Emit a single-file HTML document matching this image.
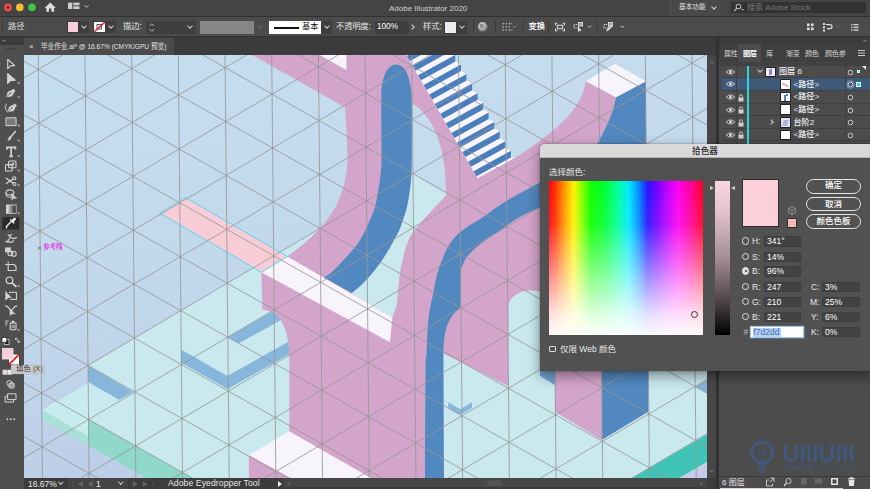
<!DOCTYPE html>
<html lang="zh-CN">
<head>
<meta charset="utf-8">
<title>Adobe Illustrator 2020</title>
<style>
*{box-sizing:border-box;margin:0;padding:0}
html,body{width:870px;height:489px;overflow:hidden;background:#3b3b3b}
body{position:relative;font-family:"Liberation Sans","Noto Sans CJK SC",sans-serif;font-size:8px;color:#dcdcdc;line-height:1}
.abs{position:absolute}
#titlebar{left:0;top:0;width:870px;height:17px;background:#444444;border-bottom:1px solid #303030}
#ctrlbar{left:0;top:17px;width:870px;height:20px;background:#4b4b4b;border-bottom:1px solid #333}
#tabbar{left:0;top:37px;width:870px;height:18px;background:#3b3b3b}
#doctab{left:24px;top:38px;width:150px;height:17px;background:#4b4b4b;color:#e4e4e4;font-size:7.7px;line-height:17px;white-space:nowrap;overflow:hidden}
#toolbar{left:0;top:37px;width:23.5px;height:452px;background:#4f4f4f}
#tooltop{left:0;top:37px;width:23.5px;height:8px;background:#3b3b3b;color:#aaa;font-size:6px;line-height:7px;padding-left:2px}
.t{position:absolute;white-space:nowrap}
.dd{position:absolute;border:solid #d0d0d0;border-width:0 1px 1px 0;width:4px;height:4px;transform:rotate(45deg)}
#statusbar{left:24px;top:478px;width:690px;height:11px;background:#3c3c3c;color:#e8e8e8;font-size:8.5px}
#vscroll{left:707px;top:55px;width:9px;height:423px;background:#474747}
#rgap{left:716px;top:37px;width:3px;height:452px;background:#323232}
#panel{left:719px;top:44px;width:151px;height:445px;background:#4c4c4c}
#ptabs{left:719px;top:44px;width:151px;height:18px;background:#3f3f3f;font-size:7.2px;letter-spacing:-0.35px;color:#d4d4d4}
.row{position:absolute;left:722px;width:148px;height:12.6px;border-bottom:1px solid #404040;font-size:8.1px;font-weight:500;color:#f0f0f0}
.eye{position:absolute;left:4px;top:3px;width:9px;height:6px}
#dialog{left:540px;top:144px;width:332px;height:227px;background:#515151;border-radius:4px 4px 0 0;box-shadow:0 5px 13px rgba(0,0,0,.42),0 0 1.5px rgba(0,0,0,.6);overflow:hidden}
#dtitle{left:0;top:0;width:332px;height:14px;background:#d9d9d9;color:#2a2a2a;font-weight:500;font-size:8.6px;line-height:14px;text-align:center;padding-right:2px;border-bottom:1px solid #b5b5b5}
.fld{position:absolute;height:10.8px;background:#434343;border:0.5px solid #3e3e3e;border-radius:1px;color:#fff;font-size:8.5px;line-height:9px;padding-left:2px}
.radio{position:absolute;width:7.7px;height:7.7px;border:0.9px solid #e2e2e2;border-radius:50%}
.lbl{position:absolute;font-size:8.5px;color:#e8e8e8}
.btn{position:absolute;left:266px;width:55px;height:14.5px;border:1px solid #e6e6e6;border-radius:8px;color:#fff;font-weight:500;font-size:8.5px;text-align:center;line-height:12px}
</style>
</head>
<body>
<div id="titlebar" class="abs">
  <svg class="abs" style="left:0;top:0" width="120" height="17" viewBox="0 0 120 17">
    <circle cx="8" cy="7.4" r="3.8" fill="#f5504e"/><circle cx="8" cy="7.4" r="1.4" fill="#8a1410"/>
    <circle cx="19.8" cy="7.4" r="3.8" fill="#f8be2e"/>
    <circle cx="32" cy="7.4" r="3.8" fill="#3bc448"/>
    <path d="M50.200 2.600 L44.600 8 H46.300 V11.800 H49 V8.600 H51.400 V11.800 H54.100 V8 H55.800 Z" fill="#dcdcdc"/>
    <rect x="68" y="2.600" width="4.300" height="6.400" fill="#cfcfcf"/><rect x="73.300" y="2.600" width="6.200" height="2.700" fill="#cfcfcf"/><rect x="73.300" y="6.300" width="6.200" height="2.700" fill="#cfcfcf"/>
    <path d="M84.5 5.3 l2 2 l2 -2" stroke="#cfcfcf" stroke-width="1" fill="none"/>
  </svg>
  <div class="t" style="left:389px;top:4.5px;font-size:8px;color:#cfcfcf">Adobe Illustrator 2020</div>
  <div class="abs" style="left:670px;top:0;width:57px;height:17px;background:#494949;border-left:1px solid #525252;border-bottom:1px solid #303030"></div>
  <div class="t" style="left:679px;top:4px;font-size:6.7px;color:#e2e2e2">基本功能</div>
  <div class="dd" style="left:712px;top:4.5px"></div>
  <div class="abs" style="left:731px;top:2px;width:135px;height:11px;background:#323232;border-radius:1px"></div>
  <svg class="abs" style="left:733px;top:3px" width="12" height="10" viewBox="0 0 12 10"><circle cx="5.5" cy="3.5" r="2.4" stroke="#c8c8c8" stroke-width="1" fill="none"/><path d="M3.8 5.3 L1 8.2" stroke="#c8c8c8" stroke-width="1.1"/><path d="M8 6 h3 l-1.5 1.6z" fill="#c8c8c8"/></svg>
  <div class="t" style="left:747px;top:4px;font-size:8px;color:#767676">搜索 Adobe Stock</div>
</div>
<div id="ctrlbar" class="abs">
  <div class="abs" style="left:2px;top:3px;width:1px;height:13px;background:#3a3a3a"></div>
  <div class="t" style="left:8px;top:6px;font-size:8.2px;color:#dadada">路径</div>
  <div class="abs" style="left:67px;top:4px;width:12px;height:12px;background:#f7cfda;border:1px solid #3a3a3a"></div>
  <div class="abs" style="left:79px;top:4px;width:10px;height:12px;background:#3e3e3e"></div><div class="dd" style="left:82px;top:6.5px"></div>
  <svg class="abs" style="left:93px;top:4px" width="13" height="12" viewBox="0 0 13 12"><rect x="0.5" y="0.5" width="12" height="11" fill="#fff" stroke="#3a3a3a"/><rect x="4" y="3.5" width="4.5" height="4.5" fill="none" stroke="#555" stroke-width="1"/><path d="M1 11 L12 1" stroke="#e0242a" stroke-width="1.6"/></svg>
  <div class="abs" style="left:106px;top:4px;width:10px;height:12px;background:#3e3e3e"></div><div class="dd" style="left:109px;top:6.5px"></div>
  <div class="t" style="left:123px;top:6px;font-size:8.2px;color:#e6e6e6">描边:</div>
  <div class="abs" style="left:146px;top:4px;width:50px;height:13px;background:#3e3e3e"></div>
  <svg class="abs" style="left:148px;top:5px" width="8" height="11" viewBox="0 0 8 11"><path d="M1.5 4 l2.3-2.3 l2.3 2.3 M1.5 7 l2.3 2.3 l2.3-2.3" stroke="#c8c8c8" fill="none" stroke-width="0.9"/></svg>
  <div class="dd" style="left:188px;top:6.5px"></div>
  <div class="abs" style="left:200px;top:4px;width:54px;height:13px;background:#868686"></div>
  <div class="dd" style="left:258px;top:6.5px;border-color:#6a6a6a"></div>
  <div class="abs" style="left:269px;top:4px;width:52px;height:13px;background:#fff"></div>
  <div class="abs" style="left:274px;top:10px;width:25px;height:1.6px;background:#111"></div>
  <div class="t" style="left:302px;top:6px;font-size:8.2px;color:#111">基本</div>
  <div class="abs" style="left:321px;top:4px;width:11px;height:13px;background:#3e3e3e"></div><div class="dd" style="left:325px;top:6.5px"></div>
  <div class="t" style="left:336px;top:6px;font-size:8.2px;color:#e6e6e6">不透明度:</div>
  <div class="abs" style="left:375px;top:4px;width:34px;height:13px;background:#3e3e3e"></div>
  <div class="t" style="left:377px;top:6px;font-size:8.2px;color:#fff">100%</div>
  <div class="dd" style="left:410px;top:8px;transform:rotate(-45deg)"></div>
  <div class="t" style="left:423px;top:6px;font-size:8.2px;color:#e6e6e6">样式:</div>
  <div class="abs" style="left:444px;top:4px;width:13px;height:13px;background:#ececec;border:1px solid #3a3a3a"></div>
  <div class="abs" style="left:457px;top:4px;width:10px;height:13px;background:#3e3e3e"></div><div class="dd" style="left:460px;top:6.5px"></div>
  <svg class="abs" style="left:470px;top:0" width="170" height="20" viewBox="470 17 170 20">
    <defs><radialGradient id="gl" cx="0.35" cy="0.3" r="0.8"><stop offset="0" stop-color="#e4e4e4"/><stop offset="0.6" stop-color="#a2a2a2"/><stop offset="1" stop-color="#6a6a6a"/></radialGradient></defs>
    <g stroke="#3a3a3a" stroke-width="1"><path d="M473.500 20 v14 M495.500 20 v14 M523 20 v14 M548.500 20 v14 M597 20 v14"/></g>
    <circle cx="482.700" cy="26.800" r="4.800" fill="url(#gl)"/><path d="M479.500 24.500 q2-1.500 4 0.300 q1 1.500 -.5 3 q-2 .8 -3-1z" fill="#8a8a8a"/>
    <g fill="#c6c6c6"><rect x="502.500" y="23" width="1.300" height="1.300"/><rect x="505.600" y="23" width="1.300" height="1.300"/><rect x="508.700" y="23" width="1.300" height="1.300"/><rect x="511.300" y="23" width="1" height="1.300"/><rect x="502.500" y="26.200" width="1.300" height="1.300"/><rect x="505.600" y="26.200" width="1.300" height="1.300"/><rect x="508.700" y="26.200" width="1.300" height="1.300"/><rect x="502.500" y="29.400" width="1.300" height="1.300"/><rect x="505.600" y="29.400" width="1.300" height="1.300"/><rect x="508.700" y="29.400" width="1.300" height="1.300"/><rect x="511.300" y="29.400" width="1" height="1.300"/></g>
    <path d="M512.800 26 l1.600 1.600 l1.600-1.600" stroke="#a0a0a0" fill="none" stroke-width="0.800"/>
    <g stroke="#d4d4d4" stroke-width="1.100" fill="none"><path d="M557.500 23.300 h-2 v2 M562.500 23.300 h2 v2 M557.500 30.700 h-2 v-2 M562.500 30.700 h2 v-2"/><rect x="557.300" y="25.300" width="5.400" height="3.400"/></g>
    <g stroke="#d4d4d4" stroke-width="1" fill="none"><rect x="574" y="24.500" width="4.500" height="3.500" stroke-dasharray="1.200 0.800"/><rect x="578.500" y="22.500" width="4" height="3.500" fill="#9a9a9a"/></g><path d="M578 26.500 v5.500 l1.500-1.300 l2.300 0z" fill="#e4e4e4"/>
    <path d="M587.900 25.800 l1.700 1.700 l1.700-1.700" stroke="#d0d0d0" fill="none" stroke-width="1"/>
    <g stroke="#d4d4d4" stroke-width="1" fill="none"><rect x="604" y="24.500" width="4.500" height="3.500" stroke-dasharray="1.200 0.800"/><rect x="608.500" y="22.500" width="4" height="3" fill="#9a9a9a"/></g><path d="M606 31.500 l1-2.500 l4.500-4.500 l1.500 1.500 l-4.500 4.500z" fill="#d8d8d8"/>
    <path d="M620.600 25.800 l1.700 1.700 l1.700-1.700" stroke="#d0d0d0" fill="none" stroke-width="1"/>
  </svg>
  <div class="t" style="left:528.500px;top:5.500px;font-size:8.200px;color:#f4f4f4;font-weight:bold">变换</div>
  <svg class="abs" style="left:805px;top:4px" width="60" height="13" viewBox="0 0 60 13">
    <g fill="#e0e0e0"><rect x="2" y="2.5" width="2.6" height="2.6"/><rect x="6" y="2.5" width="2.6" height="2.6"/><rect x="2" y="6.5" width="2.6" height="2.6"/><rect x="6" y="6.5" width="2.6" height="2.6"/></g>
    <g fill="#e0e0e0"><rect x="18" y="2" width="2" height="2"/><rect x="18" y="5.3" width="2" height="2"/><rect x="18" y="8.6" width="2" height="2"/></g><path d="M21 3.6 h4 a2 2 0 0 1 0 4 h-3" stroke="#e0e0e0" stroke-width="1.2" fill="none"/>
    <path d="M31 5.4 l1.6 1.6 l1.6-1.6" stroke="#777" fill="none" stroke-width="0.8"/>
    <g fill="#d0d0d0"><rect x="46" y="3" width="1.5" height="1.4"/><rect x="46" y="5.7" width="1.5" height="1.4"/><rect x="46" y="8.4" width="1.5" height="1.4"/><rect x="48.5" y="3" width="5" height="1.4"/><rect x="48.5" y="5.7" width="5" height="1.4"/><rect x="48.5" y="8.4" width="5" height="1.4"/></g>
  </svg>
</div>
<div id="tabbar" class="abs"></div>
<div id="doctab" class="abs"><span style="margin-left:5px;font-size:8px">×</span><span style="margin-left:7px;display:inline-block;transform-origin:0 50%;transform:scaleX(.86)">毕业作业.ai* @ 16.67% (CMYK/GPU 预览)</span></div>
<svg class="abs" style="left:24px;top:55px" width="683" height="423" viewBox="24 55 683 423">
<defs><linearGradient id="bg" x1="0" y1="0" x2="0.25" y2="1"><stop offset="0" stop-color="#c5deef"/><stop offset="0.5" stop-color="#c2d9ec"/><stop offset="1" stop-color="#bccee8"/></linearGradient></defs>
<rect x="24" y="55" width="683" height="423" fill="url(#bg)"/>
<polygon points="88,365.5 413,173.6 730,352 730,421 632,478 192.5,478 88.1,419" fill="#c9e9ee"/>
<polygon points="42.2,409.7 88.1,383 88.1,436.6" fill="#c8ecee"/>
<polygon points="42.2,410.2 88.1,436.6 88.1,445.6 42.2,419.6" fill="#a8e1d8"/>
<polygon points="88.1,419 192.5,478 146.5,478 88.1,445.6" fill="#8fd8ca"/>
<polygon points="88.2,365.5 133.3,392 119,399.8 88.2,382" fill="#87b6dc"/>
<polygon points="730,421 632,478 679.4,478 730,448.5" fill="#40c4b6"/>
<polygon points="730,448.5 679.4,478 730,478" fill="#c4cdea"/>
<polygon points="695.1,386.5 712,376.8 712,396.2" fill="#87b6dc"/>
<polygon points="227.5,337.3 273.6,310.7 292,310.7 292,314 238.8,343.3" fill="#87b6dc"/>
<polygon points="180.9,349.6 227.5,376 295,338 295,351 227.5,389 180.9,362.5" fill="#87b6dc"/>
<polygon points="448.3,402.3 460.3,409.3 472,402.3 472,407.9 460.3,414.9 448.3,407.9" fill="#87b6dc"/>
<polygon points="160,213.3 185.7,197.7 287.3,256.5 261.4,272.3" fill="#f9cdd8"/>
<path d="M252,55 L345,107.2 L346.4,130 L347.6,156 C347.6,175 343,196 332,213 C320,231 302,246 287.3,256.5 L261.4,272.3 L262.4,309.5 L274.8,312.5 C283,320 289.3,336 289.3,356 L289.3,478 L425.5,478 L425.5,363 L434.6,290 L459.1,238.8 L513.2,197 L540.2,182.3 L560,172 L560,147 L596,147 L597,144 C606,128 614,112 615.9,97.3 L586,81.2 C583,98 573,114 555.6,128.2 C544,138 530,149 514.9,157.7 L477.6,178.2 L406.4,55 Z" fill="#d4a5ca"/>
<path d="M411.8,103.500 C416,106 419.500,109 422.500,111.900 C426,115.500 429,120 431.500,124.300 C434.500,129.500 436.500,134.500 438.300,140 C440.300,146 441.800,152 442.800,158 C443.800,163.500 444.600,168.500 445,173.800 L446,195.500  C436,206 421,221 410,236.500 C406,246 404,252 403.300,257.700 C401,266 399.800,272 399.200,279 L396.700,305 L392.300,317.500 L351.700,294 L380,258 L405,200 Z" fill="#c9e9ee"/>
<path d="M411.8,103.500 C416,106 419.500,109 422.500,111.900 C426,115.500 429,120 431.500,124.300 C434.500,129.500 436.500,134.500 438.300,140 C440.300,146 441.800,152 442.800,158 C443.800,163.500 444.600,168.500 445,173.800 L446,195.500  L411.800,173.300 Z" fill="#c4dced"/>
<path d="M540.2,200 L518.1,211 L493.5,228 L470,248 L455,270 L452,300 L445,318 L438,340 L443.3,353.2 L508.4,386.2 L508.4,308 C508.4,298 518,290.5 531,290.5 C544,290.5 555,298 555,308 L555,411.7 L601.7,440 L601.7,200 Z" fill="#d4a5ca"/>
<polygon points="540,300 555,308 555,385.2 540,375.8" fill="#6fa2d2"/>
<polygon points="601.7,200 648.3,200 648.3,411.7 601.7,440" fill="#5288c0"/>
<path d="M381.300,98 C381,78 387,64.600 396.500,64.600 C405.500,64.600 411.800,78 411.800,103.500 L411.800,120 L381.300,120 Z M381.3,120 C381.3,126.7 381.6,150.9 381.5,160 C381.4,169.1 381.1,168.8 380.5,174.3 C379.9,179.8 378.9,187.2 377.9,192.9 C376.9,198.6 375.9,203.7 374.4,208.7 C372.8,213.7 370.3,218.9 368.6,223 C366.9,227.1 366.1,229.3 364,233.2 C361.9,237.1 359.4,241.7 355.8,246.3 C352.2,250.9 346.8,256.6 342.7,261 C338.6,265.4 334.4,269.8 331.3,272.5 C328.2,275.2 325.1,276.6 323.9,277.4 L351.7,292.9 C353.5,291.4 358.4,287.8 362.4,283.9 C366.4,279.9 371.4,274.4 375.5,269.2 C379.6,264.0 383.6,258.0 386.9,252.8 C390.2,247.6 393.0,241.9 395.1,238.1 C397.2,234.3 398.1,233.0 399.4,230 C400.7,227.0 401.7,224.1 403,220.1 C404.3,216.1 406.1,211.1 407.3,205.8 C408.5,200.6 409.4,193.6 410.1,188.6 C410.8,183.6 411.0,180.5 411.3,175.7 C411.6,170.9 411.7,169.3 411.8,160 C411.9,150.7 411.8,126.7 411.8,120 Z" fill="#5288c0"/>
<path d="M560,172 C556.7,173.7 548.0,178.1 540.2,182.3 C532.4,186.5 520.4,192.9 513.2,197 C506.0,201.1 501.9,203.7 497,207 C492.1,210.3 488.2,213.7 483.7,216.7 C479.2,219.7 474.3,222.2 470.1,225 C465.9,227.8 462.0,230.5 458.6,233.6 C455.2,236.7 452.6,239.6 450,243.6 C447.4,247.6 445.0,252.9 442.9,257.9 C440.8,262.9 438.9,267.5 437.2,273.7 C435.5,279.9 434.1,289.2 432.9,295 C431.7,300.8 430.8,303.6 430,308.5 C429.2,313.4 428.5,317.2 427.9,324.6 C427.3,332.1 426.9,345.6 426.5,353.2 C426.1,360.8 425.8,349.2 425.5,370 C425.2,390.8 425.1,460.0 425,478 L444,478 C443.9,458.8 443.6,385.2 443.5,363 C443.4,340.8 443.2,350.5 443.7,344.6 C444.2,338.7 445.1,332.2 446.5,327.4 C447.9,322.6 449.9,319.3 452.2,316 C454.5,312.7 459.1,308.8 460.5,307.4 C460.6,301.5 460.5,279.0 460.8,272.2 C461.1,265.4 461.1,269.1 462.2,266.5 C463.3,263.9 464.7,259.8 467.2,256.5 C469.7,253.2 473.7,249.6 477.3,246.5 C480.9,243.4 484.9,240.5 488.7,237.9 C492.5,235.3 495.1,234.0 500,230.7 C504.9,227.4 511.4,221.9 518.1,217.9 C524.8,213.9 533.2,210.4 540.2,206.9 C547.2,203.4 556.7,198.7 560,197 Z" fill="#5288c0"/>
<polygon points="261.4,272.3 287.3,256.5 392.3,317.5 390,342.2" fill="#f7f5fb"/>
<polygon points="319.8,55 346.4,55 346.4,70" fill="#f7f5fb"/>
<polygon points="248.9,455.2 289.2,431.3 371,478 290.7,478" fill="#f7f5fb"/>
<polygon points="248.9,455.2 290.7,478 248.9,478" fill="#d4a5ca"/>
<path d="M615.9,97.300 L646,81.200 L646,200 L575,200 L597,144 C606,128 614,112 615.900,97.300 Z" fill="#5288c0"/>
<polygon points="586,81.2 615,63.8 646,81.2 615.9,97.3" fill="#f7f5fb"/>
<polygon points="400,44 438.8,26 438.8,32.6 444.3,35.6 444.3,42.2 449.9,45.2 449.9,51.8 455.4,54.8 455.4,61.4 461,64.4 461,71 466.5,74 466.5,80.6 472.1,83.6 472.1,90.2 477.6,93.2 477.6,99.8 483.2,102.8 483.2,109.4 488.7,112.4 488.7,119 494.3,122 494.3,128.6 499.8,131.6 499.8,138.2 505.4,141.2 505.4,147.8 510.9,150.8 510.9,157.4 514.9,157.7 477.6,178.2" fill="#f7f5fb"/>
<polygon points="401.5,46.5 404.4,51.5 438.8,32.6 438.8,26" fill="#4a7ebd"/>
<polygon points="407,56.1 409.9,61.1 444.3,42.2 444.3,35.6" fill="#4a7ebd"/>
<polygon points="412.6,65.7 415.5,70.7 449.9,51.8 449.9,45.2" fill="#4a7ebd"/>
<polygon points="418.1,75.3 421,80.3 455.4,61.4 455.4,54.8" fill="#4a7ebd"/>
<polygon points="423.7,84.9 426.6,89.9 461,71 461,64.4" fill="#4a7ebd"/>
<polygon points="429.2,94.5 432.1,99.5 466.5,80.6 466.5,74" fill="#4a7ebd"/>
<polygon points="434.8,104.1 437.7,109.1 472.1,90.2 472.1,83.6" fill="#4a7ebd"/>
<polygon points="440.3,113.7 443.2,118.7 477.6,99.8 477.6,93.2" fill="#4a7ebd"/>
<polygon points="445.9,123.3 448.8,128.3 483.2,109.4 483.2,102.8" fill="#4a7ebd"/>
<polygon points="451.4,132.9 454.3,137.9 488.7,119 488.7,112.4" fill="#4a7ebd"/>
<polygon points="457,142.5 459.9,147.5 494.3,128.6 494.3,122" fill="#4a7ebd"/>
<polygon points="462.5,152.1 465.4,157.1 499.8,138.2 499.8,131.6" fill="#4a7ebd"/>
<polygon points="468.1,161.7 471,166.7 505.4,147.8 505.4,141.2" fill="#4a7ebd"/>
<polygon points="473.6,171.3 476.5,176.3 510.9,157.4 510.9,150.8" fill="#4a7ebd"/>
<g stroke="#969696" stroke-width="0.95" fill="none" stroke-opacity="0.88">
<path d="M-8.8,15.9 L-3.8,528.2"/>
<path d="M37.9,15.5 L42.9,527.7"/>
<path d="M84.6,15 L89.6,527.3"/>
<path d="M131.3,14.6 L136.3,526.8"/>
<path d="M177.9,14.1 L183,526.3"/>
<path d="M224.6,13.6 L229.7,525.9"/>
<path d="M271.3,13.2 L276.3,525.4"/>
<path d="M318,12.7 L323,525"/>
<path d="M364.7,12.3 L369.7,524.5"/>
<path d="M411.4,11.8 L416.4,524.1"/>
<path d="M458.1,11.4 L463.1,523.6"/>
<path d="M504.8,10.9 L509.8,523.1"/>
<path d="M551.5,10.4 L556.5,522.7"/>
<path d="M598.2,10 L603.2,522.2"/>
<path d="M644.8,9.5 L649.9,521.8"/>
<path d="M691.5,9.1 L696.6,521.3"/>
<path d="M738.2,8.6 L743.2,520.9"/>
<path d="M-13.8,-496.3 L784.4,-45.8"/>
<path d="M-13.3,-442.4 L775.9,-908.5"/>
<path d="M-13.3,-442.4 L784.9,8.2"/>
<path d="M-12.8,-388.5 L776.5,-854.6"/>
<path d="M-12.8,-388.5 L785.4,62.1"/>
<path d="M-12.3,-334.5 L777,-800.6"/>
<path d="M-12.3,-334.5 L786,116"/>
<path d="M-11.7,-280.6 L777.5,-746.7"/>
<path d="M-11.7,-280.6 L786.5,169.9"/>
<path d="M-11.2,-226.7 L778,-692.8"/>
<path d="M-11.2,-226.7 L787,223.8"/>
<path d="M-10.7,-172.8 L778.6,-638.9"/>
<path d="M-10.7,-172.8 L787.6,277.8"/>
<path d="M-10.1,-118.9 L779.1,-585"/>
<path d="M-10.1,-118.9 L788.1,331.7"/>
<path d="M-9.6,-64.9 L779.6,-531"/>
<path d="M-9.6,-64.9 L788.6,385.6"/>
<path d="M-9.1,-11 L780.2,-477.1"/>
<path d="M-9.1,-11 L789.1,439.5"/>
<path d="M-8.6,42.9 L780.7,-423.2"/>
<path d="M-8.6,42.9 L789.7,493.4"/>
<path d="M-8,96.8 L781.2,-369.3"/>
<path d="M-8,96.8 L790.2,547.4"/>
<path d="M-7.5,150.7 L781.7,-315.4"/>
<path d="M-7.5,150.7 L790.7,601.3"/>
<path d="M-7,204.7 L782.3,-261.4"/>
<path d="M-7,204.7 L791.3,655.2"/>
<path d="M-6.4,258.6 L782.8,-207.5"/>
<path d="M-6.4,258.6 L791.8,709.1"/>
<path d="M-5.9,312.5 L783.3,-153.6"/>
<path d="M-5.9,312.5 L792.3,763"/>
<path d="M-5.4,366.4 L783.9,-99.7"/>
<path d="M-5.4,366.4 L792.8,817"/>
<path d="M-4.9,420.3 L784.4,-45.8"/>
<path d="M-4.9,420.3 L793.4,870.9"/>
<path d="M-4.3,474.3 L784.9,8.2"/>
<path d="M-4.3,474.3 L793.9,924.8"/>
<path d="M-3.8,528.2 L785.4,62.1"/>
<path d="M-3.8,528.2 L794.4,978.7"/>
<path d="M-3.3,582.1 L786,116"/>
<path d="M-3.3,582.1 L795,1032.6"/>
<path d="M-2.7,636 L786.5,169.9"/>
<path d="M-2.7,636 L795.5,1086.6"/>
<path d="M-2.2,689.9 L787,223.8"/>
<path d="M-2.2,689.9 L796,1140.5"/>
<path d="M-1.7,743.9 L787.6,277.8"/>
<path d="M-1.7,743.9 L796.5,1194.4"/>
<path d="M-1.2,797.8 L788.1,331.7"/>
<path d="M-1.2,797.8 L797.1,1248.3"/>
<path d="M-0.6,851.7 L788.6,385.6"/>
<path d="M-0.6,851.7 L797.6,1302.2"/>
<path d="M-0.1,905.6 L789.1,439.5"/>
<path d="M-0.1,905.6 L798.1,1356.2"/>
<path d="M0.4,959.5 L789.7,493.4"/>
<path d="M0.4,959.5 L798.7,1410.1"/>
<path d="M1,1013.5 L790.2,547.4"/>
<path d="M1,1013.5 L799.2,1464"/>
<path d="M1.5,1067.4 L790.7,601.3"/>
<path d="M1.5,1067.4 L799.7,1517.9"/>
<path d="M2,1121.3 L791.3,655.2"/>
</g>
<polygon points="160,213.3 185.7,197.7 287.3,256.5 261.4,272.3" fill="none" stroke="#38d6ee" stroke-width="0.8"/>
<text x="43" y="248.5" font-size="6.5" fill="#e020e8" font-weight="bold" font-family="'Liberation Serif','Noto Serif CJK SC',serif">参考线</text>
<path d="M38,246.500 l3,3 m0,-3 l-3,3" stroke="#333" stroke-width="0.600"/>
</svg>
<div id="toolbar" class="abs"></div>
<div id="tooltop" class="abs">››</div>
<svg class="abs" style="left:0;top:37px" width="24" height="452" viewBox="0 37 24 452">
  <rect x="6" y="48.500" width="11" height="1" fill="#3a3a3a"/>
  <defs><linearGradient id="tg" x1="0" x2="1"><stop offset="0" stop-color="#f2f2f2"/><stop offset="1" stop-color="#1c1c1c"/></linearGradient></defs>
  <g fill="none" stroke="#d4d4d4" stroke-width="1.100" stroke-linejoin="round" stroke-linecap="round">
    <path d="M7.700 59.500 V68.600 L10.100 66.100 L14.600 65.400 Z"/>
    <path d="M7.700 73.600 V83.400 L10.400 80.700 L15.200 80.200 Z" fill="#d4d4d4"/>
    <!-- pen -->
    <path d="M6.200 97.300 L7.300 92.800 Q8.300 91 11.300 90.300 L13.800 92.800 Q13.300 95.600 11.300 96.600 Z" fill="#d4d4d4" stroke="none"/><path d="M6.800 96.700 L10 93.600" stroke="#4f4f4f" stroke-width="0.800"/><circle cx="10.400" cy="93.300" r="0.800" fill="#4f4f4f" stroke="none"/>
    <path d="M12.200 89.600 L14.600 92" stroke-width="2.600" stroke-linecap="butt"/>
    <!-- curvature -->
    <path d="M7.700 112 L8.800 107.500 Q9.800 105.700 12.800 105 L15.300 107.500 Q14.800 110.300 12.800 111.300 Z" fill="#d4d4d4" stroke="none"/><path d="M8.300 111.400 L11.500 108.300" stroke="#4f4f4f" stroke-width="0.800"/><circle cx="11.900" cy="108" r="0.800" fill="#4f4f4f" stroke="none"/>
    <path d="M13.700 104.300 L16.100 106.700" stroke-width="2.600" stroke-linecap="butt"/><path d="M6.300 104 q-2 3 -.3 5.500 q1 1.500 1.500 2.500" stroke-width="0.900"/>
    <!-- rect -->
    <rect x="6.300" y="117.800" width="9.800" height="7.800" fill="#787878" stroke-width="1"/>
    <!-- brush -->
    <path d="M15.400 131.500 L10.600 137" stroke-width="1.500"/><path d="M10.300 136.500 l1.400 1.300 q-1 2.700 -4.700 3.400 q1.800-1.700 1.400-3.300 q.6-1.300 1.900-1.400z" fill="#d4d4d4" stroke="none"/>
    <!-- type -->
    <path d="M6.900 149.600 V147.300 H15.400 V149.600 M11.150 147.300 V156 M9.300 156.300 H13" stroke-width="1.700" stroke-linecap="butt" stroke-linejoin="miter"/>
    <!-- shape builder -->
    <rect x="8.600" y="161" width="7.400" height="6.800" rx="1"/><rect x="5.500" y="164.600" width="6.800" height="6.400" rx="1"/><path d="M10.500 166 l3.200-2.800 M13.700 163.200 h-1.800 M13.700 163.200 v1.800" stroke-width="0.900"/>
    <!-- scissors -->
    <circle cx="14.300" cy="178.300" r="1.500"/><circle cx="14.500" cy="184" r="1.500"/><path d="M13 179 L6.300 183.500 M13.200 183.200 L6.300 178.200" stroke-width="1.300"/>
    <!-- puppet -->
    <ellipse cx="10" cy="192.500" rx="3.900" ry="2.600"/><path d="M6.100 192.500 v2.500 q.5 2.300 4.500 2.300" /><path d="M11.800 193.500 v6.300 l1.700-1.500 l2.800 0z" fill="#d4d4d4" stroke-width="0.600"/>
    <!-- artboard -->
    <path d="M8.200 264.500 h5.800 l2 2 v4 h-7.800z" /><path d="M5.500 264.500 h2.700 M8.200 261.800 v2.700" stroke-width="1"/>
    <!-- zoom -->
    <circle cx="9.500" cy="280.300" r="3.300" stroke-width="1.200"/><path d="M12.100 282.900 L16 286.500" stroke-width="1.800"/>
    <!-- free transform -->
    <path d="M5.600 291.700 v8.500 l2.400-2.300 l3-.4z" fill="#d4d4d4" stroke-width="0.500"/><path d="M9.500 292.300 h7 v7 h-6" stroke-dasharray="1.600 1.200" stroke-width="1.200"/>
    <!-- puppet warp -->
    <path d="M5.600 305.800 q2 .3 3.500 2.500 l2 2.500 M16.800 305.800 q-2 .3 -3.500 2.500 l-1.500 2" stroke-width="1.200"/><path d="M10 309 v6.500 l1.700-1.600 l3.300 0z" fill="#d4d4d4" stroke-width="0.500"/>
    <!-- symbol sprayer -->
    <rect x="10.200" y="323" width="5.800" height="6.800" rx="0.800"/><circle cx="13.100" cy="326.600" r="1.300" stroke-width="0.900"/><path d="M12 321 h2.200 v2 h-2.200z" fill="#d4d4d4" stroke-width="0.500"/><path d="M5.500 321 h2.800 M5.500 323 h2 M5.500 325 h1.200" stroke-width="0.900"/>
    <!-- draw modes -->
    <circle cx="9.500" cy="383.200" r="2.700" stroke-width="1"/><rect x="9" y="383" width="5.200" height="5" rx="1" fill="#9a9a9a" stroke-width="0.900"/>
    <rect x="5.500" y="396.300" width="8" height="5.800" stroke-width="1"/><rect x="8" y="393.800" width="8" height="5.800" fill="#4f4f4f" stroke-width="1"/>
  </g>
  <!-- default / swap -->
  <rect x="4.200" y="339.600" width="4.800" height="4.800" fill="#1e1e1e" stroke="#eee" stroke-width="0.700"/><rect x="2" y="337.400" width="4.800" height="4.800" fill="#fff" stroke="#1e1e1e" stroke-width="0.700"/>
  <path d="M15.200 338.800 q3.600 -.2 3.600 3.800 M18.800 342.800 l-1.400-1.600 M18.800 342.800 l1.400-1.600 M15 338.800 l1.500 1.300 M15 338.800 l1.500-1.300" stroke="#d4d4d4" stroke-width="0.900" fill="none"/>
  <!-- tool flyout triangles -->
  <g fill="#cfcfcf"><path d="M19.400 84.400 v-2.200 h-2.200z M19.400 98.600 v-2.200 h-2.200z M19.400 127 v-2.200 h-2.200z M19.400 142 v-2.200 h-2.200z M19.400 157.500 v-2.200 h-2.200z M19.400 172 v-2.200 h-2.200z M19.400 186.500 v-2.200 h-2.200z M19.400 214.600 v-2.200 h-2.200z M19.400 287.500 v-2.200 h-2.200z M19.400 331.500 v-2.200 h-2.200z"/></g>
  <!-- gradient -->
  <rect x="6.500" y="205" width="9.600" height="8.300" fill="url(#tg)" stroke="#d8d8d8" stroke-width="0.800"/>
  <!-- eyedropper selected -->
  <rect x="2.300" y="217.200" width="17" height="12.300" fill="#2b2b2b"/>
  <g stroke="#ececec" fill="none" stroke-linecap="round"><path d="M6.300 227.800 L7 225.800 L11.300 221.500" stroke-width="1.500"/><path d="M10.600 219.800 L13.800 223" stroke-width="1.400"/><path d="M12.600 221 L14.600 219" stroke-width="2.800"/></g>
  <!-- blend / live paint -->
  <g fill="none" stroke="#d4d4d4" stroke-width="1.100" stroke-linecap="round"><path d="M5.600 241.500 q2.500 .5 3.500-2.500 q.8-2.500 3-1 q1.500 1.500 4.500-.5 M8 234.800 l2 1.600 l1.300-2 M7.500 242.300 q2.500-1 4 .2 q1.500 -.3 2-2"/>
  <rect x="5.600" y="248" width="4.600" height="3.800" fill="#d4d4d4"/><circle cx="10.300" cy="253.300" r="2.400"/><circle cx="13.800" cy="253.900" r="2.400"/></g>
  <!-- fill / stroke swatches -->
  <rect x="8.500" y="354" width="11" height="11" fill="#fff" stroke="#2a2a2a" stroke-width="0.800"/><path d="M9 364.500 L19 354.500" stroke="#e0242a" stroke-width="1.800"/>
  <rect x="2.500" y="348.500" width="10.500" height="10.500" fill="#f9cdd9" stroke="#e8e8e8" stroke-width="0.800"/>
  <rect x="2.900" y="370" width="4.400" height="4.400" fill="#f9cdd9" stroke="#ddd" stroke-width="0.500"/><rect x="8" y="370" width="4.400" height="4.400" fill="#eee" stroke="#ddd" stroke-width="0.500"/>
  <g fill="#d0d0d0"><circle cx="7.400" cy="419.300" r="0.950"/><circle cx="10.900" cy="419.300" r="0.950"/><circle cx="14.300" cy="419.300" r="0.950"/></g>
</svg>
<div class="abs" style="left:11.300px;top:364.600px;width:33px;height:9.400px;background:#c9c9c9;border-radius:1.500px;box-shadow:0 0 1px #777;color:#3a3a3a;font-size:7.300px;line-height:8px;padding-left:5px;white-space:nowrap;z-index:5">填色 (X)</div>
<div id="vscroll" class="abs"></div>
<svg class="abs" style="left:707px;top:55px" width="9" height="423" viewBox="0 0 9 423"><path d="M2.500 8.500 l2-2 l2 2" stroke="#8a8a8a" fill="none" stroke-width="0.8"/><path d="M2.500 415 l2 2 l2-2" stroke="#8a8a8a" fill="none" stroke-width="0.8"/></svg>
<div id="rgap" class="abs"></div>
<div id="panel" class="abs"></div>
<div class="abs" style="left:719px;top:37px;width:151px;height:7px;background:#3b3b3b;color:#aaa;font-size:6px;line-height:7px;text-align:right;padding-right:3px">››</div>
<div id="ptabs" class="abs">
<div class="abs" style="left:19px;top:0;width:23px;height:18px;background:#4c4c4c"></div>
<div class="t" style="left:5px;top:6px;">属性</div>
<div class="t" style="left:24px;top:6px;color:#fff;font-weight:bold">图层</div>
<div class="t" style="left:47px;top:6px;">库</div>
<div class="t" style="left:67px;top:6px;">渐变</div>
<div class="t" style="left:86px;top:6px;">颜色</div>
<div class="t" style="left:106px;top:6px;">颜色参</div>
<div class="abs" style="left:139px;top:6px;width:7px;height:1px;background:#ccc;box-shadow:0 2.500px 0 #ccc,0 5px 0 #ccc"></div>
</div>
<div class="abs" style="left:719px;top:62px;width:151px;height:3.500px;background:#424242"></div>
<div class="row" style="top:65.8px;background:#4c4c4c">
<svg class="eye" viewBox="0 0 9 6"><path d="M0.300 3 Q4.500 -1.200 8.700 3 Q4.500 7.200 0.300 3Z" fill="none" stroke="#dcdcdc" stroke-width="0.9"/><circle cx="4.500" cy="3" r="1.400" fill="#dcdcdc"/></svg>
<div class="abs" style="left:14px;top:0;width:1px;height:13px;background:#404040"></div>
<div class="abs" style="left:25px;top:0;width:2px;height:13px;background:#2fd3dc"></div>
<div class="dd" style="left:36px;top:2.500px;border-color:#ccc"></div>
<div class="abs" style="left:43px;top:0.800px;width:10.500px;height:10.500px;background:#f1eef5;border:1px solid #222"><div class="abs" style="left:3px;top:1.500px;width:3px;height:6px;background:#8d87c9;transform:skewY(-20deg)"></div></div>
<div class="t" style="left:57px;top:2.400px">图层 6</div>
<div class="abs" style="left:123px;top:0;width:1px;height:13px;background:#404040"></div>
<svg class="abs" style="left:124px;top:2px" width="9" height="9" viewBox="0 0 9 9"><circle cx="4.500" cy="4.500" r="2.300" fill="none" stroke="#e2e2e2" stroke-width="0.850"/></svg>
<div class="abs" style="left:135px;top:4.500px;width:3px;height:3px;background:#2fd3dc;border:0.500px solid #dff"></div>
<div class="abs" style="left:140px;top:0;width:0;height:0;border-left:4px solid transparent;border-top:4px solid #e8e8e8"></div>
</div>
<div class="row" style="top:78.4px;background:#3f5a79">
<svg class="eye" viewBox="0 0 9 6"><path d="M0.300 3 Q4.500 -1.200 8.700 3 Q4.500 7.200 0.300 3Z" fill="none" stroke="#dcdcdc" stroke-width="0.9"/><circle cx="4.500" cy="3" r="1.400" fill="#dcdcdc"/></svg>
<div class="abs" style="left:14px;top:0;width:1px;height:13px;background:#404040"></div>
<div class="abs" style="left:25px;top:0;width:2px;height:13px;background:#2fd3dc"></div>
<div class="abs" style="left:58px;top:0.800px;width:10.500px;height:10.500px;background:#fff;border:1px solid #222;overflow:hidden"><div class="abs" style="left:1px;top:3.500px;width:7px;height:1.500px;background:#f2a9bd;transform:rotate(30deg)"></div></div>
<div class="t" style="left:71.500px;top:2.400px">&lt;路径&gt;</div>
<div class="abs" style="left:123px;top:0;width:1px;height:13px;background:#404040"></div>
<svg class="abs" style="left:124px;top:2px" width="9" height="9" viewBox="0 0 9 9"><circle cx="4.500" cy="4.500" r="3.800" fill="none" stroke="#8ea3bb" stroke-width="0.900"/><circle cx="4.500" cy="4.500" r="2.300" fill="none" stroke="#e2e2e2" stroke-width="0.850"/></svg>
<div class="abs" style="left:134px;top:3.500px;width:5px;height:5px;background:#2fd3dc;border:1px solid #dff"></div>
</div>
<div class="row" style="top:91.0px;background:#4c4c4c">
<svg class="eye" viewBox="0 0 9 6"><path d="M0.300 3 Q4.500 -1.200 8.700 3 Q4.500 7.200 0.300 3Z" fill="none" stroke="#dcdcdc" stroke-width="0.9"/><circle cx="4.500" cy="3" r="1.400" fill="#dcdcdc"/></svg>
<svg class="abs" style="left:16px;top:2.500px" width="6" height="8" viewBox="0 0 6 8"><rect x="0.500" y="3.400" width="5" height="4" rx="0.500" fill="#cfcfcf"/><path d="M1.500 3.500 V2.300 a1.500 1.500 0 0 1 3 0 V3.500" stroke="#cfcfcf" stroke-width="0.9" fill="none"/></svg>
<div class="abs" style="left:14px;top:0;width:1px;height:13px;background:#404040"></div>
<div class="abs" style="left:25px;top:0;width:2px;height:13px;background:#2fd3dc"></div>
<div class="abs" style="left:58px;top:0.800px;width:10.500px;height:10.500px;background:#fff;border:1px solid #222;overflow:hidden"><div class="abs" style="left:2.500px;top:2px;width:2px;height:6px;background:#4d7fc0"></div><div class="abs" style="left:4.500px;top:1.500px;width:2.500px;height:2px;background:#4d7fc0"></div></div>
<div class="t" style="left:71.500px;top:2.400px">&lt;路径&gt;</div>
<div class="abs" style="left:123px;top:0;width:1px;height:13px;background:#404040"></div>
<svg class="abs" style="left:124px;top:2px" width="9" height="9" viewBox="0 0 9 9"><circle cx="4.500" cy="4.500" r="2.300" fill="none" stroke="#e2e2e2" stroke-width="0.850"/></svg>
</div>
<div class="row" style="top:103.7px;background:#4c4c4c">
<svg class="eye" viewBox="0 0 9 6"><path d="M0.300 3 Q4.500 -1.200 8.700 3 Q4.500 7.200 0.300 3Z" fill="none" stroke="#dcdcdc" stroke-width="0.9"/><circle cx="4.500" cy="3" r="1.400" fill="#dcdcdc"/></svg>
<svg class="abs" style="left:16px;top:2.500px" width="6" height="8" viewBox="0 0 6 8"><rect x="0.500" y="3.400" width="5" height="4" rx="0.500" fill="#cfcfcf"/><path d="M1.500 3.500 V2.300 a1.500 1.500 0 0 1 3 0 V3.500" stroke="#cfcfcf" stroke-width="0.9" fill="none"/></svg>
<div class="abs" style="left:14px;top:0;width:1px;height:13px;background:#404040"></div>
<div class="abs" style="left:25px;top:0;width:2px;height:13px;background:#2fd3dc"></div>
<div class="abs" style="left:58px;top:0.800px;width:10.500px;height:10.500px;background:#fff;border:1px solid #222;overflow:hidden"></div>
<div class="t" style="left:71.500px;top:2.400px">&lt;路径&gt;</div>
<div class="abs" style="left:123px;top:0;width:1px;height:13px;background:#404040"></div>
<svg class="abs" style="left:124px;top:2px" width="9" height="9" viewBox="0 0 9 9"><circle cx="4.500" cy="4.500" r="2.300" fill="none" stroke="#e2e2e2" stroke-width="0.850"/></svg>
</div>
<div class="row" style="top:116.3px;background:#4c4c4c">
<svg class="eye" viewBox="0 0 9 6"><path d="M0.300 3 Q4.500 -1.200 8.700 3 Q4.500 7.200 0.300 3Z" fill="none" stroke="#dcdcdc" stroke-width="0.9"/><circle cx="4.500" cy="3" r="1.400" fill="#dcdcdc"/></svg>
<svg class="abs" style="left:16px;top:2.500px" width="6" height="8" viewBox="0 0 6 8"><rect x="0.500" y="3.400" width="5" height="4" rx="0.500" fill="#cfcfcf"/><path d="M1.500 3.500 V2.300 a1.500 1.500 0 0 1 3 0 V3.500" stroke="#cfcfcf" stroke-width="0.9" fill="none"/></svg>
<div class="abs" style="left:14px;top:0;width:1px;height:13px;background:#404040"></div>
<div class="abs" style="left:25px;top:0;width:2px;height:13px;background:#2fd3dc"></div>
<div class="dd" style="left:47px;top:4px;border-color:#ccc;transform:rotate(-45deg)"></div>
<div class="abs" style="left:58px;top:0.800px;width:10.500px;height:10.500px;background:#e4e4f2;border:1px solid #222;overflow:hidden"><div class="abs" style="left:2px;top:1.500px;width:4.500px;height:6px;background:#aeb4dc;transform:skewX(-15deg)"></div></div>
<div class="t" style="left:71.500px;top:2.400px">台阶2</div>
<div class="abs" style="left:123px;top:0;width:1px;height:13px;background:#404040"></div>
<svg class="abs" style="left:124px;top:2px" width="9" height="9" viewBox="0 0 9 9"><circle cx="4.500" cy="4.500" r="2.300" fill="none" stroke="#e2e2e2" stroke-width="0.850"/></svg>
</div>
<div class="row" style="top:128.9px;background:#4c4c4c">
<svg class="eye" viewBox="0 0 9 6"><path d="M0.300 3 Q4.500 -1.200 8.700 3 Q4.500 7.200 0.300 3Z" fill="none" stroke="#dcdcdc" stroke-width="0.9"/><circle cx="4.500" cy="3" r="1.400" fill="#dcdcdc"/></svg>
<svg class="abs" style="left:16px;top:2.500px" width="6" height="8" viewBox="0 0 6 8"><rect x="0.500" y="3.400" width="5" height="4" rx="0.500" fill="#cfcfcf"/><path d="M1.500 3.500 V2.300 a1.500 1.500 0 0 1 3 0 V3.500" stroke="#cfcfcf" stroke-width="0.9" fill="none"/></svg>
<div class="abs" style="left:14px;top:0;width:1px;height:13px;background:#404040"></div>
<div class="abs" style="left:25px;top:0;width:2px;height:13px;background:#2fd3dc"></div>
<div class="abs" style="left:58px;top:0.800px;width:10.500px;height:10.500px;background:#fff;border:1px solid #222;overflow:hidden"></div>
<div class="t" style="left:71.500px;top:2.400px">&lt;路径&gt;</div>
<div class="abs" style="left:123px;top:0;width:1px;height:13px;background:#404040"></div>
<svg class="abs" style="left:124px;top:2px" width="9" height="9" viewBox="0 0 9 9"><circle cx="4.500" cy="4.500" r="2.300" fill="none" stroke="#e2e2e2" stroke-width="0.850"/></svg>
</div>
<div class="row" style="top:141.5px;background:#4c4c4c">
<svg class="eye" viewBox="0 0 9 6"><path d="M0.300 3 Q4.500 -1.200 8.700 3 Q4.500 7.200 0.300 3Z" fill="none" stroke="#dcdcdc" stroke-width="0.9"/><circle cx="4.500" cy="3" r="1.400" fill="#dcdcdc"/></svg>
<svg class="abs" style="left:16px;top:2.500px" width="6" height="8" viewBox="0 0 6 8"><rect x="0.500" y="3.400" width="5" height="4" rx="0.500" fill="#cfcfcf"/><path d="M1.500 3.500 V2.300 a1.500 1.500 0 0 1 3 0 V3.500" stroke="#cfcfcf" stroke-width="0.9" fill="none"/></svg>
<div class="abs" style="left:14px;top:0;width:1px;height:13px;background:#404040"></div>
<div class="abs" style="left:25px;top:0;width:2px;height:13px;background:#2fd3dc"></div>
</div>
<div class="abs" style="left:719px;top:476px;width:151px;height:13px;background:#4c4c4c;border-top:1px solid #3a3a3a"></div>
<div class="t" style="left:722px;top:478.500px;font-size:8px;color:#e8e8e8">6 图层</div>
<svg class="abs" style="left:760px;top:474.500px" width="110" height="14.500" viewBox="759 466.500 110 14.500">
<g stroke="#d0d0d0" fill="none" stroke-width="0.9"><path d="M768 471.500 h-2.500 v6 h6 v-2.500 M769 469.500 h4 v4 M773 469.500 l-4 4"/><circle cx="787.500" cy="472.500" r="2.600"/><path d="M785.500 474.500 l-2.500 3" stroke-width="1.300"/></g>
<g fill="#686868"><rect x="800" y="469.500" width="5.500" height="6.500"/><rect x="814" y="470" width="7" height="5"/></g>
<g fill="#e4e4e4"><rect x="830" y="469.500" width="7" height="7" /><path d="M847.500 471 h6 l-.6 6.500 h-4.800z M846.800 469.700 h7.400 v0.900 h-7.400z M849 468.800 h3 v1 h-3z"/></g><rect x="831.500" y="471" width="4" height="4" fill="#4c4c4c"/>
</svg>
<svg class="abs" style="left:745px;top:436px;opacity:.5" width="120" height="40" viewBox="745 436 120 40">
<g fill="none" stroke="#3466ae"><circle cx="762.200" cy="452.600" r="10.500" stroke-width="3"/><path d="M757.500 466.500 h9.500 M758.500 469.500 h7.500 M760 472 h4.500" stroke-width="2"/><path d="M759.500 449 v3 a2.700 2.700 0 0 0 5.400 0 v-3 M762.200 455 v6" stroke-width="1.600"/></g>
<text x="783" y="462" font-size="24" font-weight="bold" fill="#3466ae" font-family="'Liberation Sans',sans-serif" textLength="72" lengthAdjust="spacingAndGlyphs">UIIIUIII</text>
<text x="784" y="468.500" font-size="5" fill="#3466ae" font-family="'Liberation Sans','Noto Sans CJK SC',sans-serif" textLength="70" lengthAdjust="spacing">优优教程网 UIIIUIII.COM</text>
</svg>
<div class="abs" style="left:720px;top:488px;width:123px;height:1px;background:#d8d8d8"></div>
<div id="dialog" class="abs">
<div id="dtitle" class="abs">拾色器</div>
<div class="lbl" style="left:9px;top:23.500px">选择颜色:</div>
<div class="abs" style="left:8.700px;top:37.300px;width:154.200px;height:153.700px;background:linear-gradient(to right,#ff0018 0%,#ff3000 4%,#ff9800 10%,#fff200 16%,#7dff00 22%,#10ff00 27%,#00ff30 36%,#00ffa0 45%,#00e6ff 52%,#0090ff 58%,#2814ff 64%,#7000ff 70%,#c000ff 77%,#ff00ee 84%,#ff0090 93%,#ff0020 100%)"><div class="abs" style="left:0;top:0;width:100%;height:100%;background:linear-gradient(to bottom,rgba(255,255,255,0) 0%,rgba(255,255,255,.08) 28%,rgba(255,255,255,.36) 50%,rgba(255,255,255,.64) 70%,rgba(255,255,255,.86) 86%,rgba(255,255,255,.98) 100%)"></div></div>
<div class="abs" style="left:151px;top:166.500px;width:7px;height:7px;border:1px solid #333;border-radius:50%"></div>
<div class="abs" style="left:174.600px;top:37.300px;width:15px;height:153.700px;background:linear-gradient(to bottom,#fbd7e0 0%,#e3c2cb 20%,#a58e95 50%,#4e4346 78%,#000 100%)"></div>
<div class="abs" style="left:169.500px;top:41.500px;width:0;height:0;border-left:4.500px solid #d2d2d2;border-top:2.800px solid transparent;border-bottom:2.800px solid transparent"></div>
<div class="abs" style="left:190.500px;top:41.500px;width:0;height:0;border-right:4.500px solid #d2d2d2;border-top:2.800px solid transparent;border-bottom:2.800px solid transparent"></div>
<div class="abs" style="left:201.500px;top:34.500px;width:37px;height:48.500px;background:#fccfda;border:1px solid #2e2e2e"></div>
<svg class="abs" style="left:248px;top:62px" width="8" height="9" viewBox="0 0 8 9"><path d="M4 0.500 L7.500 2.500 V6.500 L4 8.500 L0.500 6.500 V2.500 Z M0.500 2.500 L4 4.500 L7.500 2.500 M4 4.500 V8.500" fill="none" stroke="#aaa" stroke-width="0.700"/></svg>
<div class="abs" style="left:247px;top:74px;width:10px;height:10px;background:#f8b9bd;border:1px solid #333"></div>
<div class="btn" style="top:35px;border-width:1.500px;line-height:11.500px">确定</div>
<div class="btn" style="top:52.500px">取消</div>
<div class="btn" style="top:70px">颜色色板</div>
<div class="radio" style="left:201.800px;top:93.3px"></div>
<div class="lbl" style="left:212px;top:93.3px">H:</div>
<div class="fld" style="left:224px;top:92.0px;width:37px">341°</div>
<div class="radio" style="left:201.800px;top:108.8px"></div>
<div class="lbl" style="left:212px;top:108.8px">S:</div>
<div class="fld" style="left:224px;top:107.5px;width:37px">14%</div>
<div class="radio" style="left:201.800px;top:123.4px;background:#dedede"></div>
<div class="abs" style="left:204.500px;top:126.1px;width:2.400px;height:2.400px;background:#333;border-radius:50%"></div>
<div class="lbl" style="left:212px;top:123.4px">B:</div>
<div class="fld" style="left:224px;top:122.1px;width:37px">96%</div>
<div class="radio" style="left:201.800px;top:138.8px"></div>
<div class="lbl" style="left:212px;top:138.8px">R:</div>
<div class="fld" style="left:224px;top:137.5px;width:37px">247</div>
<div class="radio" style="left:201.800px;top:153.8px"></div>
<div class="lbl" style="left:212px;top:153.8px">G:</div>
<div class="fld" style="left:224px;top:152.5px;width:37px">210</div>
<div class="radio" style="left:201.800px;top:168.8px"></div>
<div class="lbl" style="left:212px;top:168.8px">B:</div>
<div class="fld" style="left:224px;top:167.5px;width:37px">221</div>
<div class="lbl" style="left:271px;top:138.8px">C:</div>
<div class="fld" style="left:282px;top:137.5px;width:38px">3%</div>
<div class="lbl" style="left:270px;top:153.8px">M:</div>
<div class="fld" style="left:282px;top:152.5px;width:38px">25%</div>
<div class="lbl" style="left:271px;top:168.8px">Y:</div>
<div class="fld" style="left:282px;top:167.5px;width:38px">6%</div>
<div class="lbl" style="left:271px;top:183.8px">K:</div>
<div class="fld" style="left:282px;top:182.5px;width:38px">0%</div>
<div class="lbl" style="left:203.500px;top:183.800px;color:#bbb">#</div>
<div class="abs" style="left:209.500px;top:182.300px;width:54.500px;height:11.500px;background:#fff;border:1px solid #a4c6ee;box-shadow:0 0 1.500px 0.500px #7fb0ea"><span style="position:absolute;left:2px;top:0.800px;background:#b4d4fa;color:#4a6ea6;font-size:8.500px;line-height:9px;padding:0 1px">f7d2dd</span></div>
<div class="abs" style="left:9px;top:201.500px;width:6.500px;height:6.500px;border:1px solid #dcdcdc;border-radius:1px"></div>
<div class="lbl" style="left:20px;top:200.800px">仅限 Web 颜色</div>
</div>
<div id="statusbar" class="abs">
<div class="t" style="left:4px;top:1.500px">16.67%</div><div class="dd" style="left:35px;top:2px;width:3.500px;height:3.500px"></div>
<div class="abs" style="left:44px;top:0;width:60px;height:11px;background:#444"></div>
<div class="t" style="left:48px;top:2.500px;font-size:6px;color:#666;letter-spacing:4px">|◀◀</div>
<div class="t" style="left:72px;top:1.500px">1</div><div class="dd" style="left:94.500px;top:2px;width:3.500px;height:3.500px"></div>
<div class="t" style="left:108px;top:2.500px;font-size:6px;color:#666;letter-spacing:4px">▶▶|</div>
<div class="t" style="left:144px;top:1.300px;font-size:8.600px;color:#e8e8e8;letter-spacing:.1px">Adobe Eyedropper Tool</div>
<div class="abs" style="left:254px;top:2.500px;width:0;height:0;border-left:4px solid #eee;border-top:3px solid transparent;border-bottom:3px solid transparent"></div>
<div class="abs" style="left:260px;top:0;width:423px;height:8.500px;background:#474747"></div>
<div class="t" style="left:264px;top:1.500px;font-size:7px;color:#888">‹</div><div class="t" style="left:676px;top:1.500px;font-size:7px;color:#888">›</div>
<div class="abs" style="left:463px;top:1.500px;width:15px;height:6px;border-radius:3px;background:#545454"></div>
</div>
</body>
</html>
